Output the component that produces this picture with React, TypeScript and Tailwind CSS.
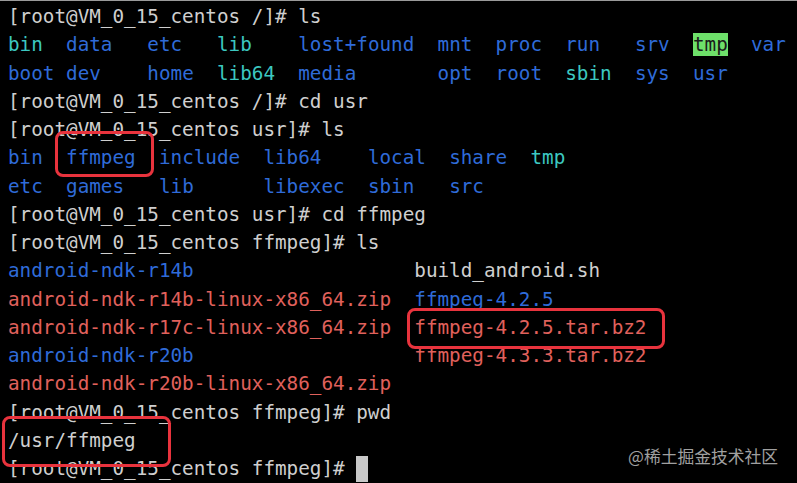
import React from 'react'

// ─── Colours ──────────────────────────────────────────────────────────────────

const C = {
  txt: 'text-[#cfcfcf]',
  dir: 'text-[#2f6bd8]',
  lnk: 'text-[#3cc8c0]',
  zip: 'text-[#e0615c]',
}

type Seg = { t: string; c?: string; hl?: boolean }

const P = (dir: string, cmd: string): Seg[] => [{ t: `[root@VM_0_15_centos ${dir}]# ${cmd}`, c: C.txt }]

// pad a listing entry to a fixed column width
const pad = (t: string, w: number) => t.padEnd(w, ' ')

const LINES: Seg[][] = [
  P('/', 'ls'),
  [
    { t: pad('bin', 5), c: C.lnk },
    { t: pad('data', 7), c: C.dir },
    { t: pad('etc', 6), c: C.dir },
    { t: pad('lib', 7), c: C.lnk },
    { t: pad('lost+found', 12), c: C.dir },
    { t: pad('mnt', 5), c: C.dir },
    { t: pad('proc', 6), c: C.dir },
    { t: pad('run', 6), c: C.dir },
    { t: pad('srv', 5), c: C.dir },
    { t: 'tmp', hl: true },
    { t: '  ' },
    { t: 'var', c: C.dir },
  ],
  [
    { t: pad('boot', 5), c: C.dir },
    { t: pad('dev', 7), c: C.dir },
    { t: pad('home', 6), c: C.dir },
    { t: pad('lib64', 7), c: C.lnk },
    { t: pad('media', 12), c: C.dir },
    { t: pad('opt', 5), c: C.dir },
    { t: pad('root', 6), c: C.dir },
    { t: pad('sbin', 6), c: C.lnk },
    { t: pad('sys', 5), c: C.dir },
    { t: 'usr', c: C.dir },
  ],
  P('/', 'cd usr'),
  P('usr', 'ls'),
  [
    { t: pad('bin', 5), c: C.dir },
    { t: pad('ffmpeg', 8), c: C.dir },
    { t: pad('include', 9), c: C.dir },
    { t: pad('lib64', 9), c: C.dir },
    { t: pad('local', 7), c: C.dir },
    { t: pad('share', 7), c: C.dir },
    { t: 'tmp', c: C.lnk },
  ],
  [
    { t: pad('etc', 5), c: C.dir },
    { t: pad('games', 8), c: C.dir },
    { t: pad('lib', 9), c: C.dir },
    { t: pad('libexec', 9), c: C.dir },
    { t: pad('sbin', 7), c: C.dir },
    { t: 'src', c: C.dir },
  ],
  P('usr', 'cd ffmpeg'),
  P('ffmpeg', 'ls'),
  [
    { t: pad('android-ndk-r14b', 35), c: C.dir },
    { t: 'build_android.sh', c: C.txt },
  ],
  [
    { t: 'android-ndk-r14b-linux-x86_64.zip', c: C.zip },
    { t: '  ' },
    { t: 'ffmpeg-4.2.5', c: C.dir },
  ],
  [
    { t: 'android-ndk-r17c-linux-x86_64.zip', c: C.zip },
    { t: '  ' },
    { t: 'ffmpeg-4.2.5.tar.bz2', c: C.zip },
  ],
  [
    { t: pad('android-ndk-r20b', 35), c: C.dir },
    { t: 'ffmpeg-4.3.3.tar.bz2', c: C.zip },
  ],
  [{ t: 'android-ndk-r20b-linux-x86_64.zip', c: C.zip }],
  P('ffmpeg', 'pwd'),
  [{ t: '/usr/ffmpeg', c: C.txt }],
]

// ─── Page ─────────────────────────────────────────────────────────────────────

export default function App() {
  return (
    <div className="relative w-[797px] h-[483px] overflow-hidden bg-black border-t border-[#9a9a9a]">
      <div
        className="pl-[8px] pt-[2px] text-[19.3px] leading-[28.25px] whitespace-pre"
        style={{ fontFamily: '"DejaVu Sans Mono", "Liberation Mono", monospace' }}
      >
        {LINES.map((line, i) => (
          <div key={i}>
            {line.map((s, j) =>
              s.hl ? (
                <span key={j} className="bg-[#6ee06a] text-[#1a1a1a]">{s.t}</span>
              ) : (
                <span key={j} className={s.c}>{s.t}</span>
              )
            )}
          </div>
        ))}
        <div className="flex items-center">
          <span className={C.txt}>{'[root@VM_0_15_centos ffmpeg]# '}</span>
          <span className="inline-block w-[12px] h-[26px] bg-[#c8c8c8]" />
        </div>
      </div>

      {/* ── Highlight boxes ── */}
      <div className="absolute left-[55px] top-[130px] w-[99px] h-[46px] rounded-[8px] border-[3px] border-[#e8333d]" />
      <div className="absolute left-[407px] top-[307px] w-[258px] h-[41px] rounded-[8px] border-[3px] border-[#e8333d]" />
      <div className="absolute left-[2px] top-[415px] w-[169px] h-[51px] rounded-[8px] border-[3px] border-[#e8333d]" />

      {/* ── Watermark ── */}
      <div
        className="absolute left-[628px] top-[443px] text-[16.8px] text-[#a0a0a0]"
        style={{ fontFamily: '"Noto Sans CJK SC", "Noto Sans", sans-serif' }}
      >
        @稀土掘金技术社区
      </div>
    </div>
  )
}
